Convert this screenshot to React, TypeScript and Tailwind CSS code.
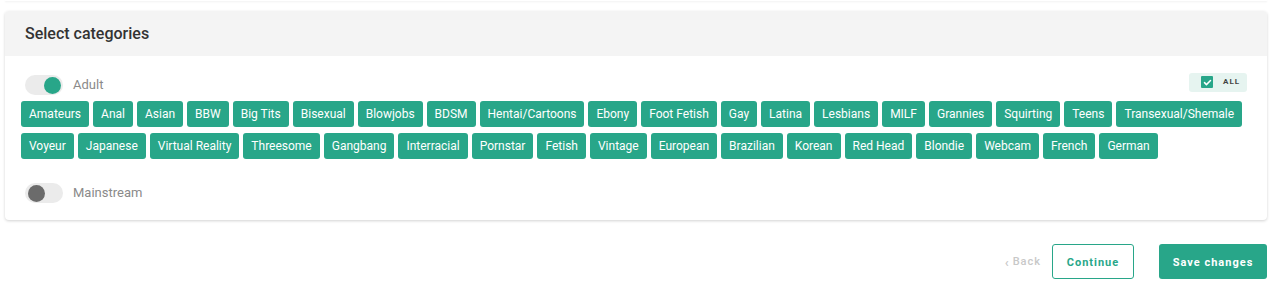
import React from 'react';

const row1 = [
  'Amateurs', 'Anal', 'Asian', 'BBW', 'Big Tits', 'Bisexual', 'Blowjobs', 'BDSM',
  'Hentai/Cartoons', 'Ebony', 'Foot Fetish', 'Gay', 'Latina', 'Lesbians', 'MILF',
  'Grannies', 'Squirting', 'Teens', 'Transexual/Shemale',
];
const row2 = [
  'Voyeur', 'Japanese', 'Virtual Reality', 'Threesome', 'Gangbang', 'Interracial',
  'Pornstar', 'Fetish', 'Vintage', 'European', 'Brazilian', 'Korean', 'Red Head',
  'Blondie', 'Webcam', 'French', 'German',
];

const Toggle = ({ on, label }: { on: boolean; label: string }) => (
  <div className="flex items-center h-[20px] ml-1">
    <div className="relative w-[38px] h-[20px] rounded-full bg-[#ebebeb]">
      <div
        className={
          on
            ? 'absolute top-[1.5px] left-[19px] w-[17px] h-[17px] rounded-full bg-[#28a689]'
            : 'absolute top-[1.5px] left-[3px] w-[17px] h-[17px] rounded-full bg-[#6b6b6b]'
        }
      />
    </div>
    <span className="ml-[10px] text-[13px] text-[#8a8a8a]">{label}</span>
  </div>
);

const Tag = ({ name }: { name: string }) => (
  <div className="shrink-0 whitespace-nowrap h-[26px] px-[8px] flex items-center rounded-[3px] bg-[#28a689] text-white text-[12px]">
    {name}
  </div>
);

export default function App() {
  return (
    <div className="w-[1286px] h-[307px] bg-white font-['Roboto',sans-serif] overflow-hidden">
      <div className="ml-[5px] w-[1262px] h-[1px] bg-white shadow-[0_1px_2px_rgba(0,0,0,0.08)]" />
      <div className="ml-[5px] mt-[10px] w-[1262px] rounded-[4px] bg-white shadow-[0_1px_3px_rgba(0,0,0,0.18)]">
        <div className="h-[45px] px-5 flex items-center bg-[#f4f4f4] rounded-t-[4px]">
          <h2 className="text-[16px] font-medium text-[#333]">Select categories</h2>
        </div>
        <div className="px-4 pt-[19px] pb-[17px]">
          <div className="flex items-center justify-between">
            <Toggle on label="Adult" />
            <div className="mr-[4px] -mt-[6px] w-[58px] h-[19px] flex items-center gap-[10px] pl-[12px] rounded-[3px] bg-[#e6f4f0]">
              <div className="w-[12px] h-[12px] rounded-[1px] bg-[#28a689] flex items-center justify-center">
                <svg width="9" height="9" viewBox="0 0 12 12" fill="none">
                  <path d="M2 6.2l2.6 2.6L10 3.4" stroke="white" strokeWidth="2" strokeLinecap="round" strokeLinejoin="round" />
                </svg>
              </div>
              <span className="text-[8px] font-bold tracking-[1px] text-[#444]">ALL</span>
            </div>
          </div>
          <div className="mt-[6px] flex flex-col gap-[6px]">
            <div className="flex gap-[4px]">
              {row1.map((t) => (
                <Tag key={t} name={t} />
              ))}
            </div>
            <div className="flex gap-[4px]">
              {row2.map((t) => (
                <Tag key={t} name={t} />
              ))}
            </div>
          </div>
          <div className="mt-[24px]">
            <Toggle on={false} label="Mainstream" />
          </div>
        </div>
      </div>
      <div className="mt-[24px] w-[1267px] flex justify-end items-center">
        <button className="pt-[2px] text-[11px] font-medium tracking-[1px] text-[#c8c8c8] flex items-center gap-[3px]">
          <span className="text-[13px] leading-none -mt-[1px]">‹</span>Back
        </button>
        <button className="ml-[11px] w-[82px] h-[35px] pt-[3px] rounded-[3px] border border-[#28a689] text-[11px] font-bold tracking-[1px] text-[#28a689]">
          Continue
        </button>
        <button className="ml-[25px] w-[108px] h-[35px] pt-[3px] rounded-[3px] bg-[#28a689] text-[11px] font-bold tracking-[1px] text-white">
          Save changes
        </button>
      </div>
    </div>
  );
}
